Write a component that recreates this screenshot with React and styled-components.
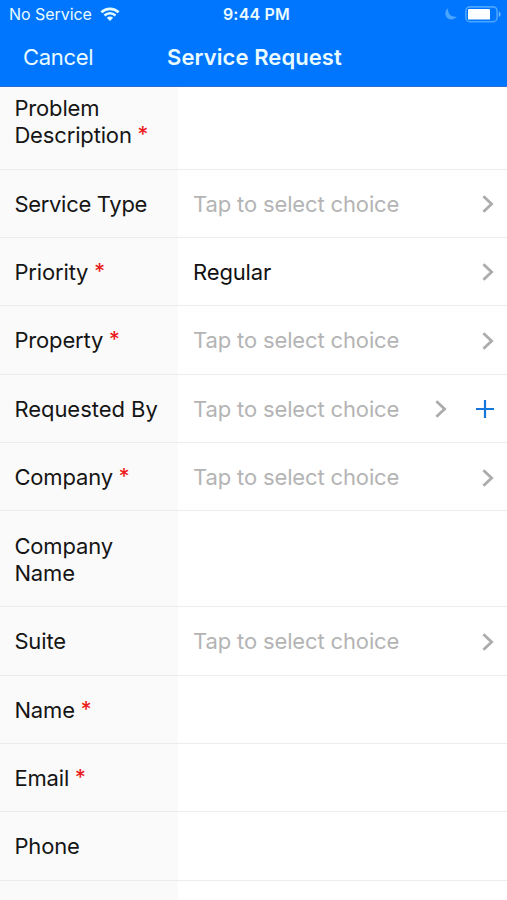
import styled, { createGlobalStyle } from "styled-components";

const fields = [
  { label: "Problem Description", required: true, tall: true },
  { label: "Service Type", select: true, tracking: "-0.3px" },
  { label: "Priority", required: true, select: true, value: "Regular" },
  { label: "Property", required: true, select: true },
  { label: "Requested By", select: true, canAdd: true, tracking: "-0.04px" },
  { label: "Company", required: true, select: true },
  { label: "Company Name", tall: true },
  { label: "Suite", select: true },
  { label: "Name", required: true },
  { label: "Email", required: true },
  { label: "Phone" },
  { label: "" },
];

function StatusBar() {
  return (
    <StatusBarStyled>
      <Carrier>
        <span>No Service</span>
        <svg width="20" height="15" viewBox="0 0 20 15" fill="none" stroke="#e4fbff">
          <path d="M1.4 5.3C6.2 0.7 13.8 0.7 18.6 5.3" strokeWidth="2.7" />
          <path d="M4.5 8.5C7.6 5.6 12.4 5.6 15.5 8.5" strokeWidth="2.5" />
          <path d="M10 14L6.8 10.8C8.6 9.1 11.4 9.1 13.2 10.8Z" fill="#e4fbff" stroke="none" />
        </svg>
      </Carrier>
      <Clock>9:44 PM</Clock>
      <Indicators>
        <svg width="12" height="12" viewBox="0 0 12 12">
          <path d="M3.2 0.3C2.2 4.8 5.6 9.6 11.7 8.6C9.6 11.8 5.4 12.4 2.6 10.3C-0.6 7.8-0.5 2.6 3.2 0.3Z" fill="#4aa5ff" />
        </svg>
        <svg width="36" height="17" viewBox="0 0 36 17">
          <rect x="0.9" y="0.9" width="31.2" height="14.8" rx="4" fill="none" stroke="#4aa5ff" strokeWidth="1.6" />
          <rect x="3" y="3" width="22" height="10.6" rx="1.2" fill="#fff" />
          <path d="M33.8 5.6C36.2 6.6 36.2 10 33.8 11Z" fill="#6fbaff" />
        </svg>
      </Indicators>
    </StatusBarStyled>
  );
}

function Chevron() {
  return (
    <svg width="12" height="18" viewBox="0 0 12 18" fill="none" stroke="#acacac" strokeWidth="2.8">
      <path d="M1.4 1.2L9.6 9L1.4 16.8" />
    </svg>
  );
}

function Field({ label, required, tall, select, value, canAdd, tracking }) {
  return (
    <Row $tall={tall}>
      <Label $tracking={tracking}>
        <span>
          {label}
          {required && <Required> *</Required>}
        </span>
      </Label>
      <Value $filled={Boolean(value)}>
        {select && (value || "Tap to select choice")}
        {select && (
          <Actions>
            <Chevron />
            {canAdd && (
              <svg width="18" height="18" viewBox="0 0 18 18" stroke="#1577dc" strokeWidth="2.2">
                <path d="M9 0V18M0 9H18" />
              </svg>
            )}
          </Actions>
        )}
      </Value>
    </Row>
  );
}

export default function App() {
  return (
    <Screen>
      <GlobalStyle />
      <Header>
        <StatusBar />
        <NavBar>
          <Cancel>Cancel</Cancel>
          <Title>Service Request</Title>
        </NavBar>
      </Header>
      <Viewport>
        <Form>
          {fields.map((field, index) => (
            <Field key={index} {...field} />
          ))}
        </Form>
      </Viewport>
    </Screen>
  );
}

const GlobalStyle = createGlobalStyle`
  body {
    margin: 0;
    font-family: Inter, sans-serif;
    background: #fff;
  }

  * {
    box-sizing: border-box;
  }

  svg {
    display: block;
    flex: none;
  }
`;

const Screen = styled.div`
  width: 507px;
  height: 900px;
  display: flex;
  flex-direction: column;
  overflow: hidden;
`;

const Header = styled.header`
  flex: none;
  height: 87px;
  background: #0076ff;
  border-bottom: 1px solid #2570d0;
  color: #e9fbff;
`;

const StatusBarStyled = styled.div`
  height: 28px;
  display: grid;
  grid-template-columns: 1fr auto 1fr;
  align-items: center;
  padding: 0 6px 0 9px;
  font-size: 16px;
`;

const Carrier = styled.div`
  display: flex;
  align-items: center;
  gap: 8px;
  letter-spacing: -0.05px;
`;

const Clock = styled.div`
  font-weight: 600;
  letter-spacing: 0.2px;
  padding-left: 3px;
`;

const Indicators = styled.div`
  display: flex;
  align-items: center;
  justify-content: flex-end;
  gap: 8px;
`;

const NavBar = styled.div`
  height: 58px;
  display: grid;
  grid-template-columns: 1fr auto 1fr;
  align-items: center;
  padding: 0 21px 0 23px;
`;

const Cancel = styled.div`
  font-size: 22px;
  letter-spacing: -0.3px;
`;

const Title = styled.div`
  font-size: 22px;
  font-weight: 600;
  letter-spacing: 0.08px;
`;

const Viewport = styled.main`
  flex: 1;
  min-height: 0;
  overflow: hidden;
`;

// The form is scrolled slightly, so the first row starts under the header
const Form = styled.div`
  margin-top: -13.4px;
`;

const Row = styled.div`
  display: flex;
  height: ${({ $tall }) => ($tall ? "96px" : "68.35px")};
  border-bottom: 1px solid #ececec;
  font-size: 22px;
  line-height: 27px;
`;

const Label = styled.div`
  width: 178px;
  flex: none;
  display: flex;
  align-items: center;
  padding: 1.7px 10px 0 14.4px;
  background: #fafafa;
  color: #151515;
  letter-spacing: ${({ $tracking }) => $tracking || "-0.15px"};
`;

const Required = styled.span`
  color: #ec1c1c;
  font-size: 21.5px;
  font-weight: 500;
  line-height: 1;
  vertical-align: 1px;
`;

const Value = styled.div`
  flex: 1;
  display: flex;
  align-items: center;
  justify-content: space-between;
  padding: 1.7px 12.6px 0 15px;
  color: ${({ $filled }) => ($filled ? "#111" : "#b4b4b4")};
  letter-spacing: -0.14px;
`;

const Actions = styled.div`
  display: flex;
  align-items: center;
  gap: 29px;
`;
